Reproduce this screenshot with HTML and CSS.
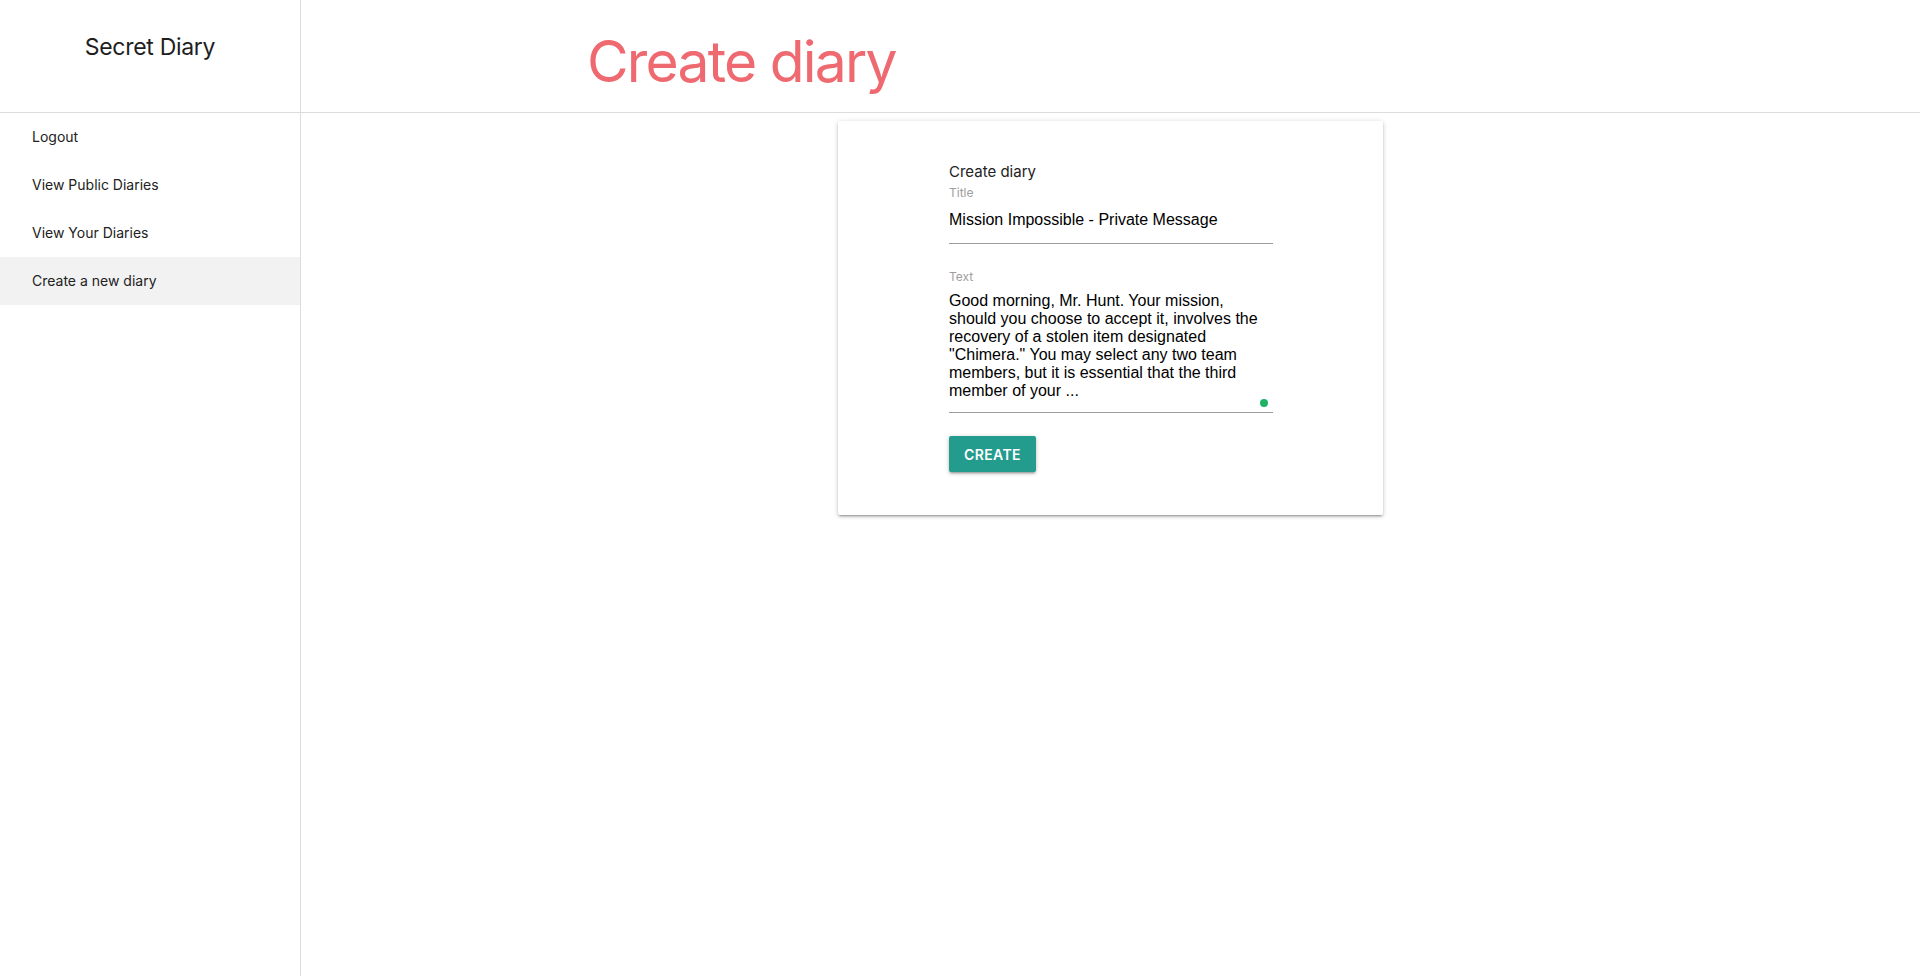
FILE: index.html
```html
<!DOCTYPE html>
<html lang="en">
<head>
<meta charset="utf-8">
<title>Secret Diary</title>
<link rel="stylesheet" href="styles.css">
</head>
<body>
<div class="app">
  <aside class="sidebar">
    <div class="brand">Secret Diary</div>
    <nav class="nav">
      <a class="nav-item" href="#">Logout</a>
      <a class="nav-item" href="#">View Public Diaries</a>
      <a class="nav-item" href="#">View Your Diaries</a>
      <a class="nav-item active" href="#">Create a new diary</a>
    </nav>
  </aside>
  <main class="main">
    <header class="page-header">
      <h1 class="page-title">Create diary</h1>
    </header>
    <section class="content">
      <div class="card">
        <form class="form">
          <div class="form-title">Create diary</div>
          <div class="field">
            <label class="field-label" for="title">Title</label>
            <input class="field-input" id="title" type="text" value="Mission Impossible - Private Message">
          </div>
          <div class="field field-text">
            <label class="field-label" for="text">Text</label>
            <textarea class="field-textarea" id="text" rows="6">Good morning, Mr. Hunt. Your mission, should you choose to accept it, involves the recovery of a stolen item designated "Chimera." You may select any two team members, but it is essential that the third member of your ...</textarea>
            <span class="status-dot"></span>
          </div>
          <button class="btn" type="button">Create</button>
        </form>
      </div>
    </section>
  </main>
</div>
</body>
</html>
```
FILE: styles.css
```css
* { box-sizing: border-box; }
html, body { margin: 0; padding: 0; height: 100%; }
body {
  font-family: Inter, "Noto Sans", "Liberation Sans", sans-serif;
  color: #222;
  background: #fff;
}
.app {
  display: flex;
  min-height: 976px;
}
.sidebar {
  width: 301px;
  flex: 0 0 301px;
  border-right: 1px solid #dcdcdc;
  display: flex;
  flex-direction: column;
}
.brand {
  height: 113px;
  border-bottom: 1px solid #dcdcdc;
  padding-top: 33px;
  text-align: center;
  font-size: 23px;
  line-height: 28px;
  letter-spacing: -0.3px;
  color: #1e1e1e;
}
.nav { display: flex; flex-direction: column; }
.nav-item {
  display: block;
  height: 48px;
  line-height: 48px;
  padding-left: 32px;
  font-size: 14px;
  color: #222;
  text-decoration: none;
}
.nav-item.active { background: #f2f2f2; }
.main {
  flex: 1;
  display: flex;
  flex-direction: column;
}
.page-header {
  height: 113px;
  border-bottom: 1px solid #dcdcdc;
  padding-left: 286px;
}
.page-title {
  margin: 0;
  padding-top: 26px;
  font-size: 57px;
  line-height: 72px;
  font-weight: 400;
  color: #ef6a70;
  letter-spacing: -1.8px;
}
.content {
  display: flex;
  justify-content: center;
  padding-top: 8px;
}
.card {
  width: 545px;
  background: #fff;
  border-radius: 2px;
  box-shadow: 0 2px 2px 0 rgba(0,0,0,0.14), 0 3px 1px -2px rgba(0,0,0,0.12), 0 1px 5px 0 rgba(0,0,0,0.2);
  padding: 42px 110px 43px 111px;
}
.form { display: flex; flex-direction: column; align-items: flex-start; }
.form-title {
  font-size: 15px;
  line-height: 18px;
  color: #222;
  margin-bottom: 4px;
}
.field {
  width: 324px;
  position: relative;
  display: flex;
  flex-direction: column;
}
.field-label {
  font-size: 12px;
  line-height: 16px;
  color: #9e9e9e;
}
.field-input {
  font-family: "Liberation Sans", Arial, sans-serif;
  font-size: 16px;
  color: #000;
  border: none;
  border-bottom: 1px solid #9e9e9e;
  height: 43px;
  padding: 0 0 4px 0;
  outline: none;
  background: transparent;
  width: 100%;
}
.field-text { margin-top: 25px; }
.field-textarea {
  font-family: "Liberation Sans", Arial, sans-serif;
  font-size: 16px;
  line-height: 18px;
  color: #000;
  border: none;
  border-bottom: 1px solid #9e9e9e;
  padding: 7px 0 12px 0;
  height: 128px;
  resize: none;
  outline: none;
  background: transparent;
  width: 100%;
  overflow: hidden;
}
.status-dot {
  position: absolute;
  right: 5px;
  bottom: 6px;
  width: 8px;
  height: 8px;
  border-radius: 50%;
  background: #1fb266;
}
.btn {
  margin-top: 23px;
  width: 87px;
  height: 36px;
  border: none;
  border-radius: 2px;
  background: #239b8d;
  color: #fff;
  font-family: Inter, "Noto Sans", "Liberation Sans", sans-serif;
  font-size: 14px;
  font-weight: 600;
  letter-spacing: 0.4px;
  text-transform: uppercase;
  box-shadow: 0 2px 2px 0 rgba(0,0,0,0.14), 0 3px 1px -2px rgba(0,0,0,0.12), 0 1px 5px 0 rgba(0,0,0,0.2);
  cursor: pointer;
}
```
